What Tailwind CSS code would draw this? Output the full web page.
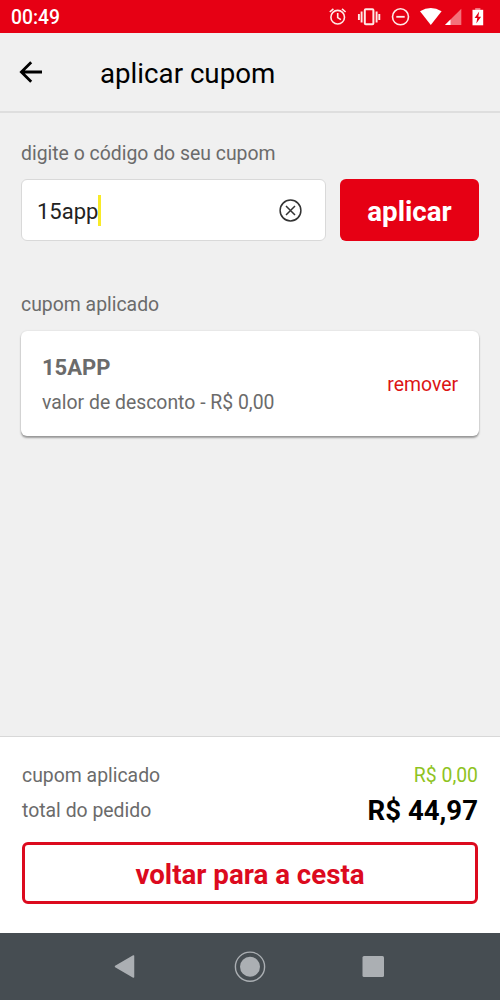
<!DOCTYPE html>
<html lang="pt-BR">
<head>
    <meta charset="UTF-8">
    <meta name="viewport" content="width=device-width, initial-scale=1.0">
    <title>aplicar cupom</title>
    <script src="https://cdn.jsdelivr.net/npm/@tailwindcss/browser@4"></script>
</head>
<body class="bg-[#f0f0f0] font-['Roboto',sans-serif] text-[#6b6b6b] w-[500px] h-[1000px] flex flex-col overflow-hidden whitespace-nowrap">

    <!-- Barra de status -->
    <div class="h-[33px] shrink-0 bg-[#e60014] flex items-center justify-between pl-[11px] pr-3 text-white">
        <span class="text-[19.3px] leading-none font-medium pt-0.5">00:49</span>
        <svg class="w-[160px] h-[33px]" viewBox="328 0 160 33" fill="none" stroke="#ffe9e6" stroke-width="1.6">
            <circle cx="337.7" cy="17.2" r="6.8"/>
            <path d="M337.7 13v4.6l3.2 2M329.8 12l3.6-3.2M342 8.8l3.6 3.2"/>
            <rect x="364.8" y="9.3" width="8.6" height="15" rx="1" stroke-width="2"/>
            <path d="M361.6 11.5v11M376.6 11.5v11M358.9 14v6M379.3 14v6" stroke-width="1.9"/>
            <circle cx="400.5" cy="16.8" r="8"/>
            <path d="M396.3 16.8h8.4" stroke-width="1.8"/>
            <path d="M420 11.2Q430.8 4.6 441.6 11.2L430.8 25Z" fill="#fff" stroke="none"/>
            <path d="M461.3 8.7V25H445Z" fill="#f4717a" stroke="none"/>
            <path d="M450.5 19.6V25H445Z" fill="#fff" stroke="none"/>
            <path d="M475.2 8h5.2v2.6h-5.2z" fill="#f4717a" stroke="none"/>
            <path d="M472.5 9.8h10.7v15.5h-10.7z" fill="#fff" stroke="none"/>
            <path d="M479.2 11.5l-4.6 6.6h2.7l-1 5.5 4.8-6.9h-2.8z" fill="#e60014" stroke="none"/>
        </svg>
    </div>

    <!-- Cabeçalho -->
    <header class="h-[80px] shrink-0 flex items-center border-b-2 border-[#dedede] pl-[19px] text-black">
        <svg class="w-[23px] h-[22px]" viewBox="0 0 23 22" fill="none" stroke="#000" stroke-width="2.8">
            <path d="M23 11H2.5M12.2 1.2L2.4 11l9.8 9.8"/>
        </svg>
        <h1 class="ml-[58px] pt-1 text-[27.7px] leading-none">aplicar cupom</h1>
    </header>

    <main class="flex-1 px-[21px] pt-[29px]">
        <label class="block text-[19.4px] leading-[23px]">digite o código do seu cupom</label>
        <div class="mt-3.5 flex gap-3.5">
            <div class="w-[305px] h-[62px] flex items-center bg-white border-[1.5px] border-[#d9d9d9] rounded-md pl-[15px] pr-[23px]">
                <span class="text-[22px] leading-none text-[#222] pt-1">15app</span>
                <span class="w-[3px] h-[31px] bg-[#f8ea28]"></span>
                <svg class="ml-auto w-[23px] h-[23px]" viewBox="0 0 23 23" fill="none" stroke="#333" stroke-width="1.5">
                    <circle cx="11.5" cy="11.5" r="10.4"/>
                    <path d="M7 7l9 9M16 7l-9 9"/>
                </svg>
            </div>
            <button class="w-[139px] h-[62px] rounded-md bg-[#e60014] text-white text-[27.7px] leading-none font-bold pt-1">aplicar</button>
        </div>

        <h2 class="mt-[52px] text-[19.4px] leading-[23px]">cupom aplicado</h2>
        <div class="mt-[15px] h-[105px] flex items-center justify-between bg-white rounded-md px-[21px] pt-0.5 shadow-[0_2px_2px_rgba(0,0,0,0.35),0_0_2px_rgba(0,0,0,0.12)]">
            <div>
                <p class="text-[22px] leading-[26px] font-bold">15APP</p>
                <p class="mt-2.5 text-[19.4px] leading-[23px]">valor de desconto - R$ 0,00</p>
            </div>
            <a class="text-[19.4px] leading-[23px] text-[#dc1414]">remover</a>
        </div>
    </main>

    <!-- Resumo do pedido -->
    <footer class="h-[197px] shrink-0 bg-white border-t border-[#d8d8d8] px-[22px] pt-[26px]">
        <div class="flex justify-between text-[19.4px] leading-[25px]">
            <span>cupom aplicado</span>
            <span class="text-[#8fc31f]">R$ 0,00</span>
        </div>
        <div class="mt-[7px] flex items-center justify-between h-8">
            <span class="text-[19.4px]">total do pedido</span>
            <span class="text-[27.6px] font-bold text-black">R$ 44,97</span>
        </div>
        <button class="mt-[15px] w-full h-[62px] rounded-md border-[3px] border-[#dc0a1e] text-[#dc0a1e] text-[27.7px] leading-none font-bold pt-1">voltar para a cesta</button>
    </footer>

    <!-- Navegação do Android -->
    <nav class="h-[67px] shrink-0 bg-[#464d52]">
        <svg class="w-[500px] h-[67px]" viewBox="0 933 500 67" fill="#abafb3">
            <path d="M115.5 966.5L133.5 956v21z" stroke="#abafb3" stroke-width="1.5" stroke-linejoin="round"/>
            <circle cx="250" cy="966.7" r="14.6" fill="none" stroke="#abafb3" stroke-width="1.4"/>
            <circle cx="250" cy="966.7" r="10"/>
            <rect x="362.5" y="956" width="21.5" height="21" rx="1.5"/>
        </svg>
    </nav>
</body>
</html>
